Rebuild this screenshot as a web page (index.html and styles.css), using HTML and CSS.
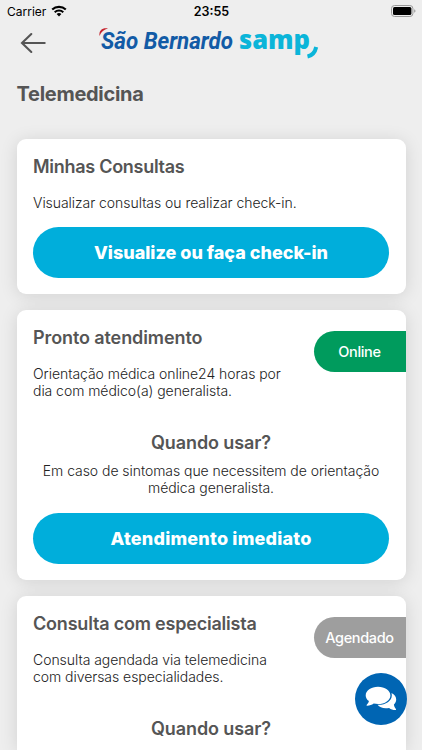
FILE: index.html
```html
<!DOCTYPE html>
<html lang="pt-BR">
<head>
  <meta charset="UTF-8" />
  <meta name="viewport" content="width=device-width, initial-scale=1.0" />
  <title>Telemedicina</title>
  <link rel="stylesheet" href="styles.css">
</head>
<body>
  <div class="status-bar">
    <div class="carrier">
      <span>Carrier</span>
      <svg class="wifi" viewBox="0 0 16 12" width="16" height="12">
        <path d="M1.2 4.6a9.8 9.8 0 0 1 13.6 0" fill="none" stroke="#000" stroke-width="2.1" />
        <path d="M3.7 7.2a6.2 6.2 0 0 1 8.6 0" fill="none" stroke="#000" stroke-width="2" />
        <path d="M5.6 9.1a3.5 3.5 0 0 1 4.8 0L8 11.5z" />
      </svg>
    </div>
    <span class="time">23:55</span>
    <svg class="battery" viewBox="0 0 25 12" width="25" height="12">
      <rect x="0.5" y="0.5" width="21.4" height="11" rx="3" fill="none" stroke="#9a9a9a" />
      <rect x="2" y="2" width="18.4" height="8" rx="1.5" />
      <path d="M23.2 4.2q1.3.5 1.3 1.8t-1.3 1.8z" fill="#9a9a9a" />
    </svg>
  </div>

  <header class="header">
    <svg class="back" viewBox="0 0 26 22" width="26" height="22">
      <path d="M11.3 2 2 11l9.3 9M2.4 11h22.3" />
    </svg>
    <svg class="logo" viewBox="0 0 222 36" width="222" height="36">
      <path d="M1.500 9C.8 3.200 4.500.6 10 1.500 6 2.500 3.300 4.600 1.500 9z" fill="#c5232e" />
      <text class="logo-bernardo" x="3" y="21.6" textLength="132" lengthAdjust="spacingAndGlyphs">São Bernardo</text>
      <text class="logo-samp" x="141" y="21.600" textLength="71" lengthAdjust="spacingAndGlyphs">samp</text>
      <path d="M209.500 29.500q7-1.500 8.700-9.500" fill="none" stroke="#0bb5d9" stroke-width="4" />
    </svg>
  </header>

  <main>
    <h1>Telemedicina</h1>

    <section class="card checkin">
      <h2>Minhas Consultas</h2>
      <p>Visualizar consultas ou realizar check-in.</p>
      <button class="button">Visualize ou faça check-in</button>
    </section>

    <section class="card immediate">
      <span class="badge online">Online</span>
      <h2>Pronto atendimento</h2>
      <p>Orientação médica online24 horas por<br>dia com médico(a) generalista.</p>
      <h3>Quando usar?</h3>
      <p class="when">Em caso de sintomas que necessitem de orientação médica generalista.</p>
      <button class="button">Atendimento imediato</button>
    </section>

    <section class="card specialist">
      <span class="badge scheduled">Agendado</span>
      <h2>Consulta com especialista</h2>
      <p>Consulta agendada via telemedicina<br>com diversas especialidades.</p>
      <h3>Quando usar?</h3>
    </section>
  </main>

  <div class="chat">
    <svg viewBox="0 0 32 26" width="32" height="26">
      <path d="M26.5 7c3 1.400 4.700 3.700 4.700 6.400 0 2-.9 3.700-2.300 5 .2 1.800 1 3.300 2 4.500.4.600.1 1.200-.6 1.200-2.400 0-4.400-.8-6.200-2.200-5 1-9.300-.2-11.600-3.100 7.700.4 14.300-3.600 14.300-9.300 0-.9-.1-1.700-.3-2.500z" />
      <path d="M13 .8c6.900 0 12.400 3.800 12.400 8.600S19.900 18 13 18c-1.500 0-2.900-.2-4.300-.5-1.900 1.400-4 2.200-6.500 2.200-.6 0-.8-.6-.4-1 1.100-1.200 1.900-2.300 2.100-3.700C1.800 13.500.7 11.600.7 9.400.7 4.600 6.200.8 13 .8z" />
    </svg>
  </div>
</body>
</html>
```
FILE: styles.css
```css
* {
  box-sizing: border-box;
}

body {
  margin: 0;
  background-color: #eeeeee;
  font-family: Inter, 'Liberation Sans', sans-serif;
  color: #222;
}

.status-bar {
  display: grid;
  grid-template-columns: 1fr auto 1fr;
  align-items: center;
  height: 22px;
  padding: 0 6px 0 7px;
  color: #000;
}

.carrier {
  display: flex;
  align-items: center;
  gap: 5px;
  font-size: 12px;
}

.wifi {
  margin-top: -1px;
}

.time {
  font-size: 12.5px;
  font-weight: 600;
}

.battery {
  margin-top: -1px;
  justify-self: end;
}

.header {
  display: flex;
  align-items: flex-start;
  height: 60px;
  padding: 5px 0 0 20px;
}

.back {
  margin-top: 5px;
  fill: none;
  stroke: #555;
  stroke-width: 2.1;
  stroke-linecap: round;
}

.logo {
  margin-left: 52px;
  overflow: visible;
}

.logo-bernardo {
  font: italic 700 24.5px Roboto, sans-serif;
  fill: #125ba6;
}

.logo-samp {
  font: 800 26.5px 'Open Sans', sans-serif;
  fill: #0bb5d9;
}

main {
  padding: 0 16.5px;
}

h1, h2, h3, p {
  margin: 0;
}

h1 {
  height: 57px;
  font-size: 20px;
  line-height: 24px;
  font-weight: 700;
  letter-spacing: -0.28px;
  color: #555;
}

.card {
  position: relative;
  margin-bottom: 16px;
  padding: 17px 16.5px 0;
  background-color: #fff;
  border-radius: 9px;
  box-shadow: 0 2px 18px rgba(0, 0, 0, 0.12);
}

.checkin {
  height: 155px;
}

.immediate {
  height: 270px;
}

.specialist {
  height: 154px;
  margin-bottom: 0;
  border-radius: 9px 9px 0 0;
}

h2, h3 {
  font-size: 18px;
  line-height: 22px;
  font-weight: 600;
  letter-spacing: -0.2px;
  color: #555;
}

.checkin h2 {
  letter-spacing: -0.28px;
}

.immediate h2 {
  letter-spacing: -0.1px;
}

p {
  margin-top: 16px;
  font-size: 14px;
  line-height: 17px;
  font-weight: 300;
  letter-spacing: -0.05px;
}

h3 {
  margin-top: 33px;
  letter-spacing: -0.1px;
  text-align: center;
}

.when {
  margin-top: 8px;
  text-align: center;
}

.button {
  display: block;
  width: 100%;
  height: 51px;
  margin-top: 16px;
  padding: 0;
  border: none;
  border-radius: 26px;
  background-color: #00aedb;
  color: #fff;
  font-family: inherit;
  font-size: 18px;
  font-weight: 800;
}

.immediate .button {
  margin-top: 17px;
  letter-spacing: 0.2px;
}

/* status tag stuck to the right edge of a card */
.badge {
  position: absolute;
  top: 21px;
  right: 0;
  width: 92px;
  height: 41px;
  border-radius: 21px 0 0 21px;
  color: #fff;
  font-size: 14.5px;
  line-height: 41px;
  font-weight: 500;
  letter-spacing: -0.35px;
  text-align: center;
}

.online {
  background-color: #009b5d;
}

.scheduled {
  background-color: #9e9e9e;
}

.chat {
  position: absolute;
  left: 355px;
  top: 673px;
  display: flex;
  align-items: center;
  justify-content: center;
  width: 52px;
  height: 52px;
  border-radius: 50%;
  background-color: #0065b3;
}

.chat svg {
  fill: #fff;
}
```
